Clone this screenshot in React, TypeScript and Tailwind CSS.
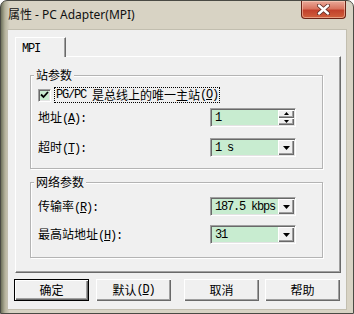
const raised =
  "bg-[#f0f0f0] shadow-[inset_1px_1px_0_#fff,inset_-1px_-1px_0_#696969,inset_-2px_-2px_0_#a0a0a0]";
const sunken =
  "border border-t-[#a0a0a0] border-l-[#a0a0a0] border-r-white border-b-white bg-[#c8ecd0] shadow-[inset_1px_1px_0_#696969,inset_-1px_-1px_0_#e3e3e3]";

function M({ children }: { children: React.ReactNode }) {
  return <span className="font-['Liberation_Mono',monospace] text-[12px] tracking-[-1.2px]">{children}</span>;
}

function Down() {
  return (
    <svg width="7" height="4" viewBox="0 0 7 4">
      <polygon points="0,0 7,0 3.5,4" fill="#000" />
    </svg>
  );
}

function Field({ children, combo, spin }: { children: React.ReactNode; combo?: boolean; spin?: boolean }) {
  return (
    <div className={`flex h-[19px] w-[86px] p-px ${sunken}`}>
      <div className="flex flex-1 items-center pl-[3px] text-black">{children}</div>
      {combo && (
        <div className={`flex w-[16px] items-center justify-center ${raised}`}>
          <Down />
        </div>
      )}
      {spin && (
        <div className="flex w-[16px] flex-col">
          <div className={`flex flex-1 items-center justify-center ${raised}`}>
            <svg width="5" height="3" viewBox="0 0 5 3">
              <polygon points="2.5,0 5,3 0,3" fill="#000" />
            </svg>
          </div>
          <div className={`flex flex-1 items-center justify-center ${raised}`}>
            <svg width="5" height="3" viewBox="0 0 5 3">
              <polygon points="0,0 5,0 2.5,3" fill="#000" />
            </svg>
          </div>
        </div>
      )}
    </div>
  );
}

function Row({ label, children, className }: { label: React.ReactNode; children: React.ReactNode; className?: string }) {
  return (
    <div className={`flex h-[19px] items-center justify-between ${className ?? ""}`}>
      <span>{label}</span>
      {children}
    </div>
  );
}

function Group({ title, className, children }: { title: string; className: string; children: React.ReactNode }) {
  return (
    <div
      className={`relative border border-[#b4b4b4] pl-[7px] pr-[26px] shadow-[1px_1px_0_#fff,inset_1px_1px_0_#fff] ${className}`}
    >
      <span className="absolute -top-[9px] left-[3px] bg-[#f0f0f0] px-[2px] leading-[16px]">{title}</span>
      {children}
    </div>
  );
}

function Btn({ children, def, className }: { children: React.ReactNode; def?: boolean; className?: string }) {
  return (
    <button
      className={`flex h-[22px] w-[75px] items-center justify-center ${def ? "border border-black" : ""} ${raised} ${className ?? ""}`}
    >
      {children}
    </button>
  );
}

export default function App() {
  return (
    <div className="flex h-[314px] w-[354px] flex-col rounded-t-[7px] border border-[#4a4a44] bg-[linear-gradient(90deg,#6f725c_0px,#b5b29c_4px,#d8d3c4_9px)] font-['Noto_Sans_CJK_SC',sans-serif] text-[12px] text-black">
      {/* title bar */}
      <div className="flex h-[29px] items-start">
        <span className="mt-[6px] pl-[7px] font-['Noto_Sans','Noto_Sans_CJK_SC',sans-serif] text-[12px] leading-[16px] text-[#111]">
          属性 - PC Adapter(MPI)
        </span>
        <div className="mr-[7px] ml-auto flex h-[18px] w-[45px] items-center justify-center rounded-b-[4px] border border-t-0 border-[#6b2316] bg-[linear-gradient(#eaa999,#d9745f_45%,#c2412c_55%,#d0603c)] shadow-[inset_0_0_0_1px_rgba(255,220,200,0.5)]">
          <svg width="13" height="11" viewBox="0 0 13 11">
            <path d="M2 1.5 L11 9.5 M11 1.5 L2 9.5" stroke="#5a2a22" strokeWidth="4" strokeLinecap="round" />
            <path d="M2 1.5 L11 9.5 M11 1.5 L2 9.5" stroke="#fff" strokeWidth="2.4" strokeLinecap="round" />
          </svg>
        </div>
      </div>

      {/* client area */}
      <div className="mx-[7px] flex h-[279px] flex-col bg-[#f0f0f0] pt-[7px] shadow-[0_0_0_1px_#c2beaf]">
        <div className="relative z-10 -mb-px ml-[7px] flex h-[20px] w-[51px] items-start border-t border-l border-r border-t-white border-l-white border-r-[#696969] bg-[#f0f0f0] pt-[2px] pl-[6px] shadow-[inset_-1px_0_0_#a0a0a0]">
          <M>MPI</M>
        </div>
        <div className="ml-[7px] flex h-[217px] w-[326px] flex-col border border-t-white border-l-white border-r-[#696969] border-b-[#696969] pt-[18px] pr-[17px] pl-[14px] shadow-[inset_-1px_-1px_0_#a0a0a0]">
          <Group title="站参数" className="h-[94px] pt-[10px]">
            <div className="flex h-[18px] items-center">
              <div className={`flex h-[13px] w-[13px] items-center justify-center ${sunken}`}>
                <svg width="9" height="8" viewBox="0 0 9 8">
                  <path d="M1 3.5 L3.5 6 L8 1" stroke="#000" strokeWidth="1.8" fill="none" />
                </svg>
              </div>
              <span className="ml-[3px] flex h-[16px] items-center border border-dotted border-black px-px">
                <M>PG/PC{"\u00a0"}</M>是总线上的唯一主站<M>(<u>O</u>)</M>
              </span>
            </div>
            <Row
              className="mt-[4px]"
              label={
                <>
                  地址<M>(<u>A</u>):</M>
                </>
              }
            >
              <Field spin>
                <M>1</M>
              </Field>
            </Row>
            <Row
              className="mt-[11px]"
              label={
                <>
                  超时<M>(<u>T</u>):</M>
                </>
              }
            >
              <Field combo>
                <M>1{"\u00a0"}s</M>
              </Field>
            </Row>
          </Group>

          <Group title="网络参数" className="mt-[13px] h-[76px] pt-[14px]">
            <Row
              label={
                <>
                  传输率<M>(<u>R</u>):</M>
                </>
              }
            >
              <Field combo>
                <M>187.5{"\u00a0"}kbps</M>
              </Field>
            </Row>
            <Row
              className="mt-[9px]"
              label={
                <>
                  最高站地址<M>(<u>H</u>):</M>
                </>
              }
            >
              <Field combo>
                <M>31</M>
              </Field>
            </Row>
          </Group>
        </div>

        <div className="mt-[6px] flex pl-[6px]">
          <Btn def>确定</Btn>
          <Btn className="ml-[7px]">
            默认<M>(<u>D</u>)</M>
          </Btn>
          <Btn className="ml-[13px]">取消</Btn>
          <Btn className="ml-[6px]">帮助</Btn>
        </div>
      </div>
    </div>
  );
}
